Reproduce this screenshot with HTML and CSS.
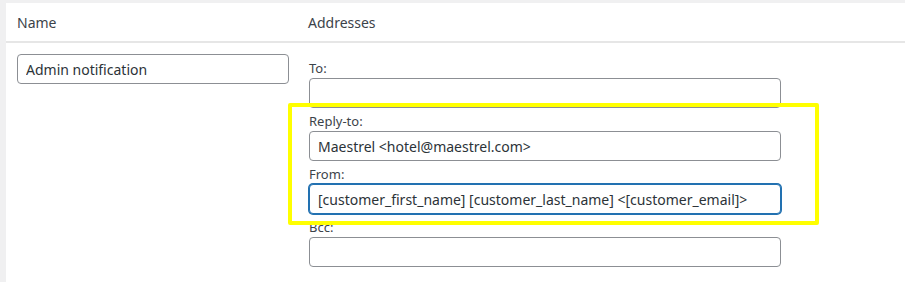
FILE: index.html
```html
<!DOCTYPE html>
<html lang="en">
<head>
  <meta charset="UTF-8">
  <meta name="viewport" content="width=device-width, initial-scale=1.0">
  <title>Notifications</title>
  <link rel="stylesheet" href="styles.css">
</head>
<body>
  <div class="panel">

    <!-- Header row -->
    <div class="row head">
      <div class="cell">Name</div>
      <div class="cell">Addresses</div>
    </div>

    <!-- Notification row -->
    <div class="row">
      <div class="cell">
        <input class="field" type="text" value="Admin notification">
      </div>
      <div class="cell">
        <label class="label">To:</label>
        <input class="field" type="text" value="">

        <label class="label">Reply-to:</label>
        <input class="field" type="text" value="Maestrel <hotel@maestrel.com>">

        <label class="label">From:</label>
        <input class="field focus" type="text" value="[customer_first_name] [customer_last_name] <[customer_email]>">

        <label class="label">Bcc:</label>
        <input class="field" type="text" value="">
      </div>
    </div>

    <!-- Highlight box -->
    <div class="highlight"></div>
  </div>
</body>
</html>
```

FILE: styles.css
```css
* {
  margin: 0;
  padding: 0;
  box-sizing: border-box;
}

body {
  background-color: #f0f0f1; /* admin background */
  font-family: "Noto Sans", "Open Sans", sans-serif;
  color: #3c434a;
  padding: 3px 0 0 6px;
  height: 100vh;
  overflow: hidden;
}

.panel {
  position: relative;
  background-color: #fff;
  height: 100%;
}

.row {
  display: grid;
  grid-template-columns: 291px 473px;
  padding-left: 11px;
}

/* Header */
.row.head {
  height: 40px;
  align-items: center;
  font-size: 14px;
  color: #3c434a;
  border-bottom: 2px solid #e6e6e6;
  padding-top: 1px;
}

.row:not(.head) {
  padding-top: 11px;
}

.row:not(.head) .cell:last-child {
  padding-top: 1px;
  padding-left: 1px;
}

.label {
  display: block;
  font-size: 13px;
  line-height: 19px;
  margin-top: 4px;
  color: #3c434a;
}

.field {
  display: block;
  width: 100%;
  height: 30px;
  border: 1px solid #8c8f94;
  border-radius: 4px;
  padding: 0 8px;
  font-family: inherit;
  font-size: 14px;
  color: #2c3338;
  background-color: #fff;
  outline: none;
}

.row .cell:first-child .field {
  width: 272px;
}

/* Focused field */
.field.focus {
  border-color: #2271b1;
  box-shadow: 0 0 0 1px #2271b1;
}

/* Yellow annotation box */
.highlight {
  position: absolute;
  left: 282px;
  top: 100px;
  width: 531px;
  height: 122px;
  border: 4px solid #ffff00;
  border-radius: 2px;
  pointer-events: none;
}
```
